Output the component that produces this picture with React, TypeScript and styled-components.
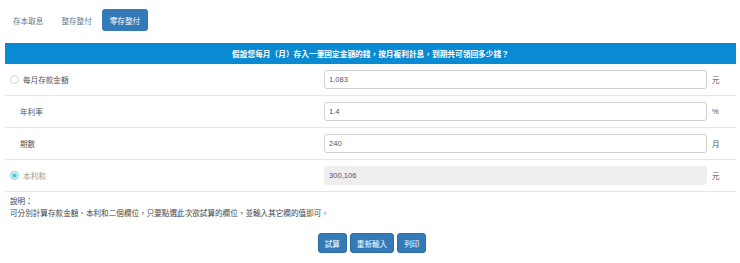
import React from "react";
import styled, { createGlobalStyle } from "styled-components";

const Global = createGlobalStyle`
  html, body { margin: 0; padding: 0; background: #fff; }
  body {
    font-family: "Liberation Sans", "Noto Sans CJK TC", sans-serif;
    font-size: 7.6px;
    color: #555;
  }
  * { box-sizing: border-box; }
`;

const Page = styled.div`
  padding: 9px 4px 0 5px;
  width: 740px;
`;

const Tabs = styled.div`
  display: flex;
  gap: 2px;
  height: 22px;
`;

const Tab = styled.div<{ $active?: boolean }>`
  display: flex;
  align-items: center;
  padding: 0 8px;
  border-radius: 3px;
  background: ${(p) => (p.$active ? "#337ab7" : "transparent")};
  color: ${(p) => (p.$active ? "#fff" : "#64778a")};
  font-size: 7.6px;
`;

const Banner = styled.div`
  margin-top: 12px;
  height: 21px;
  background: #0a8ad2;
  color: #fff;
  font-weight: bold;
  display: flex;
  align-items: center;
  justify-content: center;
  font-size: 7.7px;
`;

const Row = styled.div`
  display: flex;
  align-items: center;
  height: 32px;
  border-bottom: 1px solid #e6e6e6;
`;

const LabelCell = styled.div<{ $muted?: boolean; $indent?: boolean }>`
  width: 319px;
  display: flex;
  align-items: center;
  padding-left: ${(p) => (p.$indent ? "15px" : "5px")};
  color: ${(p) => (p.$muted ? "#999" : "#555")};
  gap: 4px;
`;

const Radio = styled.span<{ $checked?: boolean }>`
  width: 9px;
  height: 9px;
  border-radius: 50%;
  border: 1px solid ${(p) => (p.$checked ? "#8edbe8" : "#d4d4d4")};
  background: ${(p) => (p.$checked ? "#47c8de" : "#fff")};
  box-shadow: ${(p) => (p.$checked ? "inset 0 0 0 1.2px #fff" : "none")};
  flex: none;
`;

const Input = styled.div<{ $disabled?: boolean }>`
  flex: 1;
  height: 19px;
  border: 1px solid #d0d0d0;
  border-radius: 3px;
  background: ${(p) => (p.$disabled ? "#eee" : "#fff")};
  border-color: ${(p) => (p.$disabled ? "#eee" : "#d0d0d0")};
  display: flex;
  align-items: center;
  padding-left: 4px;
  color: #555;
  font-size: 7.6px;
`;

const Unit = styled.div`
  width: 29px;
  padding-left: 5px;
  color: #555;
`;

const Note = styled.div`
  padding: 4px 0 0 5px;
  line-height: 12px;
  color: #444;
`;

const Buttons = styled.div`
  display: flex;
  justify-content: center;
  gap: 3px;
  margin-top: 13px;
  padding-left: 3px;
`;

const Button = styled.div`
  height: 20px;
  padding: 0 6px;
  display: flex;
  align-items: center;
  background: #337ab7;
  border: 1px solid #2e6da4;
  border-radius: 3px;
  color: #fff;
  font-size: 7.6px;
`;

const rows = [
  { label: "每月存款金額", value: "1,083", unit: "元", radio: "off" },
  { label: "年利率", value: "1.4", unit: "%" },
  { label: "期數", value: "240", unit: "月" },
  { label: "本利和", value: "300,106", unit: "元", radio: "on", disabled: true },
];

export default function App() {
  return (
    <Page>
      <Global />
      <Tabs>
        <Tab>存本取息</Tab>
        <Tab>整存整付</Tab>
        <Tab $active>零存整付</Tab>
      </Tabs>
      <Banner>假設您每月（月）存入一筆固定金額的錢，按月複利計息，到期共可領回多少錢？</Banner>
      {rows.map((r) => (
        <Row key={r.label}>
          <LabelCell $indent={!r.radio} $muted={r.radio === "on"}>
            {r.radio && <Radio $checked={r.radio === "on"} />}
            {r.label}
          </LabelCell>
          <Input $disabled={r.disabled}>{r.value}</Input>
          <Unit>{r.unit}</Unit>
        </Row>
      ))}
      <Note>
        說明：
        <br />
        可分別計算存款金額、本利和二個欄位，只要點選此次欲試算的欄位，並輸入其它欄的值即可。
      </Note>
      <Buttons>
        <Button>試算</Button>
        <Button>重新輸入</Button>
        <Button>列印</Button>
      </Buttons>
    </Page>
  );
}
